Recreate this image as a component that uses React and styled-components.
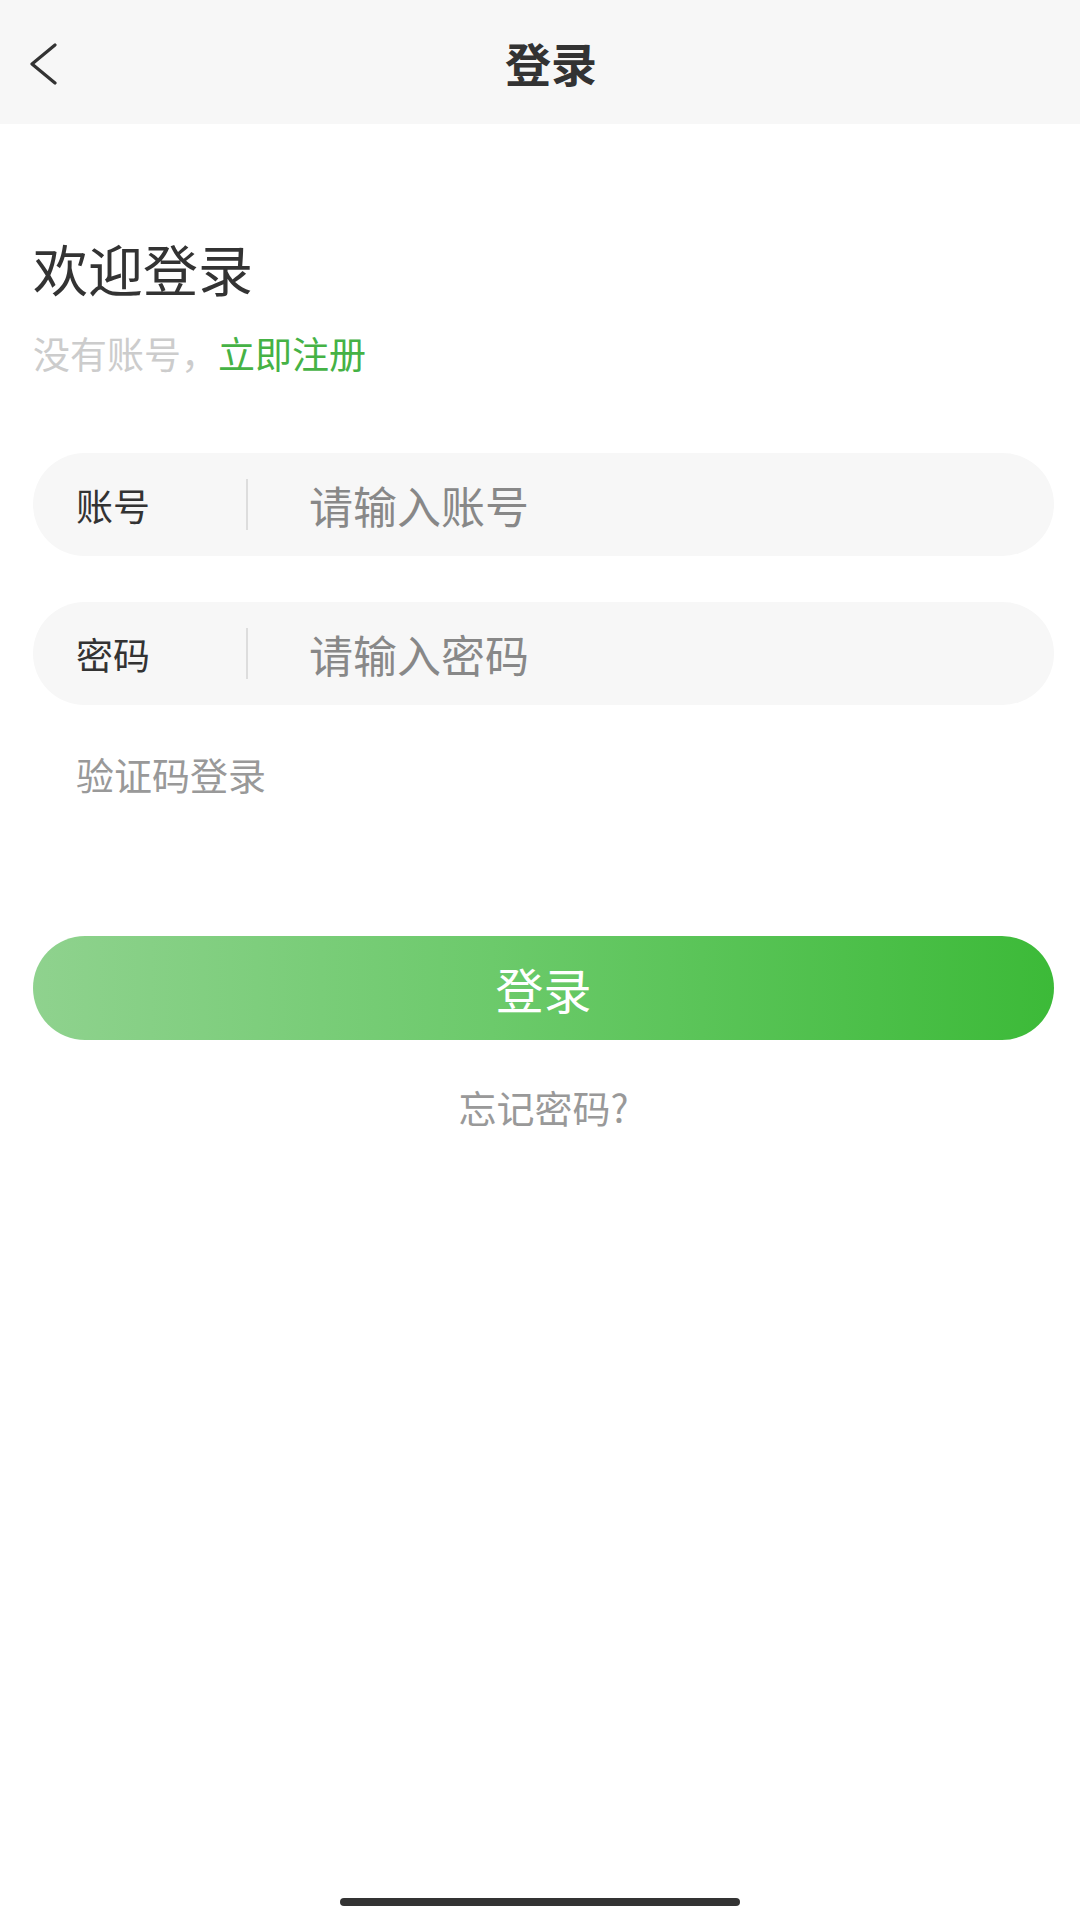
import React from 'react';
import styled, { createGlobalStyle } from 'styled-components';

const GlobalStyle = createGlobalStyle`
  html, body {
    margin: 0;
    padding: 0;
    background: #ffffff;
  }
  body {
    font-family: "Noto Sans CJK SC", "Noto Sans", "Liberation Sans", sans-serif;
    color: #333333;
  }
  * {
    box-sizing: border-box;
  }
`;

const Page = styled.div`
  display: flex;
  flex-direction: column;
  width: 1080px;
  min-height: 1920px;
  background: #ffffff;
`;

const NavBar = styled.header`
  display: grid;
  grid-template-columns: 120px 1fr 120px;
  align-items: center;
  height: 124px;
  background: #f7f7f7;
`;

const BackBtn = styled.button`
  display: flex;
  align-items: center;
  justify-content: flex-start;
  padding: 4px 0 0 28px;
  height: 124px;
  border: none;
  background: transparent;
  cursor: pointer;
`;

const NavTitle = styled.h1`
  margin: 0;
  padding-left: 22px;
  text-align: center;
  font-size: 46px;
  font-weight: 600;
  line-height: 124px;
  color: #333333;
`;

const Content = styled.main`
  display: flex;
  flex-direction: column;
  padding: 0 26px 0 33px;
`;

const Welcome = styled.h2`
  margin: 108px 0 0;
  font-size: 55px;
  font-weight: 400;
  line-height: 70px;
  color: #333333;
`;

const SubLine = styled.p`
  margin: 26px 0 0;
  font-size: 37px;
  line-height: 50px;
  color: #cccccc;
`;

const Register = styled.a`
  color: #45b245;
  text-decoration: none;
`;

const Field = styled.label`
  display: flex;
  align-items: center;
  height: 103px;
  margin-top: ${p => p.$gap}px;
  border-radius: 52px;
  background: #f7f7f7;
`;

const FieldLabel = styled.span`
  width: 213px;
  padding-left: 43px;
  font-size: 37px;
  color: #333333;
`;

const Divider = styled.span`
  width: 2px;
  height: 51px;
  background: #dddddd;
`;

const FieldInput = styled.input`
  flex: 1;
  min-width: 0;
  margin-left: 59px;
  border: none;
  outline: none;
  background: transparent;
  font-family: inherit;
  font-size: 44px;
  color: #333333;

  &::placeholder {
    color: #888888;
  }
`;

const SmsLink = styled.a`
  align-self: flex-start;
  margin: 44px 0 0 43px;
  font-size: 38px;
  line-height: 50px;
  color: #999999;
  text-decoration: none;
`;

const LoginButton = styled.button`
  height: 104px;
  margin-top: 137px;
  border: none;
  border-radius: 52px;
  background: linear-gradient(90deg, #8fd28e 0%, #6cca6b 45%, #3cba38 100%);
  font-family: inherit;
  font-size: 48px;
  color: #ffffff;
  cursor: pointer;
`;

const Forgot = styled.a`
  align-self: center;
  margin-top: 42px;
  font-size: 38px;
  line-height: 50px;
  color: #999999;
  text-decoration: none;
`;

const HomeBar = styled.div`
  align-self: center;
  width: 400px;
  height: 8px;
  margin: auto 0 14px;
  border-radius: 4px;
  background: #333333;
`;

const fields = [
  { label: '账号', placeholder: '请输入账号', type: 'text', gap: 75 },
  { label: '密码', placeholder: '请输入密码', type: 'password', gap: 46 }
];

export default function App() {
  return (
    <Page>
      <GlobalStyle />
      <NavBar>
        <BackBtn aria-label="返回">
          <svg width="30" height="42" viewBox="0 0 30 42" fill="none">
            <polyline points="27,2 4,21 27,40" stroke="#333" strokeWidth="3.2" strokeLinecap="round" strokeLinejoin="round" />
          </svg>
        </BackBtn>
        <NavTitle>登录</NavTitle>
        <span />
      </NavBar>
      <Content>
        <Welcome>欢迎登录</Welcome>
        <SubLine>
          没有账号，<Register href="#">立即注册</Register>
        </SubLine>
        {fields.map(f => (
          <Field key={f.label} $gap={f.gap}>
            <FieldLabel>{f.label}</FieldLabel>
            <Divider />
            <FieldInput type={f.type} placeholder={f.placeholder} />
          </Field>
        ))}
        <SmsLink href="#">验证码登录</SmsLink>
        <LoginButton>登录</LoginButton>
        <Forgot href="#">忘记密码?</Forgot>
      </Content>
      <HomeBar />
    </Page>
  );
}
